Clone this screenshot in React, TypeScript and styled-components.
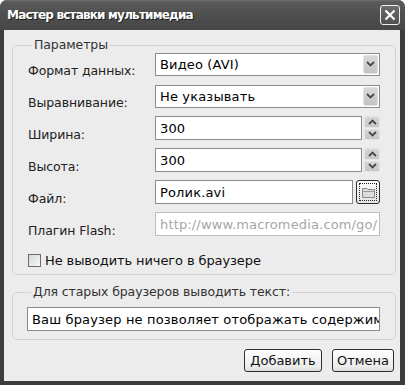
import styled, { createGlobalStyle } from "styled-components";

const GlobalStyle = createGlobalStyle`
  html, body {
    margin: 0;
    padding: 0;
    background: #ffffff;
  }
  * {
    box-sizing: border-box;
  }
`;

const Window = styled.div`
  width: 405px;
  height: 385px;
  display: flex;
  flex-direction: column;
  background: #3d3d3d;
  border-radius: 7px 7px 0 0;
  font-family: "DejaVu Sans", "Liberation Sans", sans-serif;
  font-size: 13px;
  color: #000;
  overflow: hidden;
`;

const TitleBar = styled.div`
  height: 30px;
  display: flex;
  align-items: center;
  justify-content: space-between;
  padding: 0 5px 0 7px;
  background: linear-gradient(#707070 0, #5a5a5a 2px, #4e4e4e 15px, #474747 100%);
`;

const Title = styled.span`
  color: #fff;
  font-weight: bold;
  font-size: 12px;
  letter-spacing: -0.8px;
  text-shadow: 1px 1px 0 #1e1e1e;
`;

const CloseButton = styled.div`
  width: 20px;
  height: 20px;
  border: 1px solid #f0f0f0;
  border-radius: 3px;
  background: linear-gradient(#6c6c6c, #505050);
  display: flex;
  align-items: center;
  justify-content: center;
`;

const Client = styled.div`
  flex: 1;
  margin: 0 5px 4px 4px;
  background: #ececec;
  padding: 8px 4px 0 8px;
  display: flex;
  flex-direction: column;
`;

const Group = styled.fieldset<{ $pad: string; $top?: number }>`
  margin: ${(p) => p.$top ?? 0}px 0 0 0;
  padding: ${(p) => p.$pad};
  border: 1px solid #d2d2d2;
  border-radius: 5px;
  min-width: 0;
`;

const Legend = styled.legend`
  padding: 0 2px;
  margin-left: 4px;
  line-height: 14px;
  font-size: 12.5px;
  letter-spacing: -0.1px;
  color: #333;
`;

const FormGrid = styled.div`
  display: grid;
  grid-template-columns: 127px 1fr;
  grid-auto-rows: 24px;
  row-gap: 8px;
  align-items: center;
`;

const Label = styled.span`
  color: #222;
  font-size: 12.5px;
  line-height: 15px;
  letter-spacing: -0.1px;
  align-self: end;
  margin-bottom: -2px;
`;

const Field = styled.div<{ $disabled?: boolean }>`
  height: 24px;
  display: flex;
  align-items: center;
  background: #fff;
  border: 1px solid ${(p) => (p.$disabled ? "#bdbdbd" : "#8c8c8c")};
  color: ${(p) => (p.$disabled ? "#a6a6a6" : "#000")};
  padding-left: 4px;
  letter-spacing: 0.15px;
  overflow: hidden;
  white-space: nowrap;
  flex: 1;
  min-width: 0;
`;

const FieldText = styled.span`
  flex: 1;
  overflow: hidden;
`;

const SelectField = styled(Field)`
  padding-right: 1px;
  height: 23px;
`;

const ArrowBox = styled.div`
  width: 15px;
  height: 19px;
  border-radius: 2px;
  background: linear-gradient(#d8d8d8, #c4c4c4);
  border: 1px solid #e2e2e2;
  display: flex;
  align-items: center;
  justify-content: center;
`;

const Line = styled.div`
  display: flex;
  align-items: center;
  gap: 2px;
  height: 24px;
`;

const Spin = styled.div`
  width: 16px;
  height: 24px;
  display: flex;
  flex-direction: column;
  gap: 1px;
`;

const SpinHalf = styled.div`
  flex: 1;
  border-radius: 2px;
  background: linear-gradient(#d6d6d6, #c6c6c6);
  border: 1px solid #e4e4e4;
  display: flex;
  align-items: center;
  justify-content: center;
`;

const BrowseButton = styled.div`
  width: 24px;
  height: 24px;
  border: 1px solid #2e2e2e;
  border-radius: 3px;
  background: linear-gradient(#fbfbfb, #e4e4e4);
  padding: 2px;
  margin-left: 1px;
`;

const FocusRing = styled.div`
  width: 100%;
  height: 100%;
  border: 1px dotted #222;
  display: flex;
  align-items: center;
  justify-content: center;
`;

const CheckRow = styled.div`
  display: flex;
  align-items: center;
  gap: 4px;
  margin-top: 17px;
  color: #111;
  letter-spacing: -0.1px;
`;

const CheckBox = styled.div`
  width: 13px;
  height: 13px;
  border: 1px solid #6e6e6e;
  background: linear-gradient(135deg, #d8d8d8, #f6f6f6);
`;

const Footer = styled.div`
  display: flex;
  justify-content: flex-end;
  gap: 10px;
  padding: 9px 2px 0 0;
`;

const Button = styled.div<{ $w: number }>`
  width: ${(p) => p.$w}px;
  height: 23px;
  border: 1px solid #2f2f2f;
  border-radius: 3px;
  background: linear-gradient(#fefefe, #ececec 80%, #dcdcdc);
  display: flex;
  align-items: center;
  justify-content: center;
  color: #111;
`;

const Chevron = ({ up }: { up?: boolean }) => (
  <svg width="9" height="6" viewBox="0 0 9 6">
    <path
      d={up ? "M1 5 L4.5 1.5 L8 5" : "M1 1 L4.5 4.5 L8 1"}
      fill="none"
      stroke="#4a4a4a"
      strokeWidth="1.8"
    />
  </svg>
);

const Select = ({ value }: { value: string }) => (
  <SelectField>
    <FieldText>{value}</FieldText>
    <ArrowBox>
      <Chevron />
    </ArrowBox>
  </SelectField>
);

const Spinner = ({ value }: { value: string }) => (
  <Line>
    <Field>{value}</Field>
    <Spin>
      <SpinHalf>
        <Chevron up />
      </SpinHalf>
      <SpinHalf>
        <Chevron />
      </SpinHalf>
    </Spin>
  </Line>
);

function App() {
  return (
    <>
      <GlobalStyle />
      <Window>
        <TitleBar>
          <Title>Мастер вставки мультимедиа</Title>
          <CloseButton>
            <svg width="12" height="12" viewBox="0 0 12 12">
              <path d="M1.5 1.5 L10.5 10.5 M10.5 1.5 L1.5 10.5" stroke="#fff" strokeWidth="2.2" />
            </svg>
          </CloseButton>
        </TitleBar>
        <Client>
          <Group $pad="0 15px 6px 15px">
            <Legend>Параметры</Legend>
            <FormGrid>
              <Label>Формат данных:</Label>
              <Select value="Видео (AVI)" />
              <Label>Выравнивание:</Label>
              <Select value="Не указывать" />
              <Label>Ширина:</Label>
              <Spinner value="300" />
              <Label>Высота:</Label>
              <Spinner value="300" />
              <Label>Файл:</Label>
              <Line>
                <Field>Ролик.avi</Field>
                <BrowseButton>
                  <FocusRing>
                    <svg width="13" height="11" viewBox="0 0 13 11">
                      <path d="M0.5 1.5 H5 L6 2.5 H12.5 V10.5 H0.5 Z" fill="#dcdcdc" stroke="#8a8a8a" />
                      <path d="M0.5 4.5 H12.5" stroke="#9a9a9a" />
                    </svg>
                  </FocusRing>
                </BrowseButton>
              </Line>
              <Label>Плагин Flash:</Label>
              <Field $disabled>http://www.macromedia.com/go/</Field>
            </FormGrid>
            <CheckRow>
              <CheckBox />
              <span>Не выводить ничего в браузере</span>
            </CheckRow>
          </Group>
          <Group $pad="8px 15px 8px 14px" $top={10}>
            <Legend>Для старых браузеров выводить текст:</Legend>
            <Field>Ваш браузер не позволяет отображать содержимое</Field>
          </Group>
          <Footer>
            <Button $w={78}>Добавить</Button>
            <Button $w={62}>Отмена</Button>
          </Footer>
        </Client>
      </Window>
    </>
  );
}

export default App;
